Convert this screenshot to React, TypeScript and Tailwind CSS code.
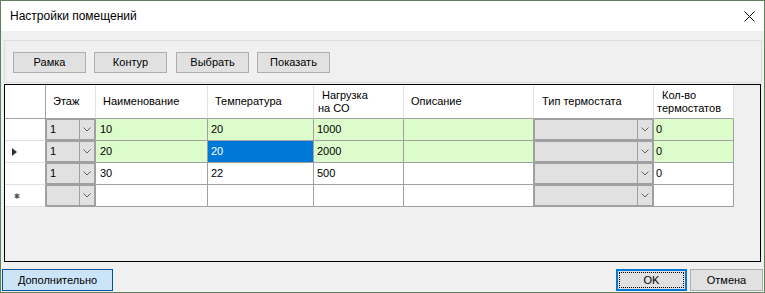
import React from "react";

const Chevron = () => (
  <svg width="8" height="5" viewBox="0 0 8 5" className="block">
    <path d="M0.5 0.5 L4 4 L7.5 0.5" fill="none" stroke="#606060" strokeWidth="1" />
  </svg>
);

type Row = {
  green: boolean;
  marker: "none" | "arrow" | "star";
  floor: string;
  name: string;
  temp: string;
  sel: boolean;
  load: string;
  cnt: string;
};

const rows: Row[] = [
  { green: true, marker: "none", floor: "1", name: "10", temp: "20", sel: false, load: "1000", cnt: "0" },
  { green: true, marker: "arrow", floor: "1", name: "20", temp: "20", sel: true, load: "2000", cnt: "0" },
  { green: false, marker: "none", floor: "1", name: "30", temp: "22", sel: false, load: "500", cnt: "0" },
  { green: false, marker: "star", floor: "", name: "", temp: "", sel: false, load: "", cnt: "" },
];

function Btn({ label, className }: { label: string; className: string }) {
  return (
    <div className={"flex items-center justify-center border border-[#adadad] bg-[#e1e1e1] text-[11px] text-black " + className}>
      {label}
    </div>
  );
}

function DataRow({ r }: { r: Row }) {
  const bg = r.green ? "bg-[#dcfccc]" : "bg-white";
  return (
    <div className="flex h-[22px]">
      <div className="flex h-[22px] w-[41px] items-center border-r border-b border-r-[#a0a0a0] border-b-[#e0e0e0] bg-white">
        {r.marker === "arrow" && (
          <svg width="5" height="8" viewBox="0 0 5 8" className="ml-[7px] block">
            <path d="M0 0 L5 4 L0 8 Z" fill="#333" />
          </svg>
        )}
        {r.marker === "star" && (
          <svg width="6" height="6" viewBox="0 0 6 6" className="ml-[9px] block">
            <path d="M3 0.3 L3 5.7 M0.5 1.5 L5.5 4.5 M0.5 4.5 L5.5 1.5" stroke="#666" strokeWidth="1.2" />
            <circle cx="3" cy="3" r="1.8" fill="#555" />
          </svg>
        )}
      </div>
      <div className="h-[22px] w-[50px] border-r border-b border-[#a0a0a0] bg-[#e1e1e1]">
        <div className="flex h-full w-full border border-[#a0a0a0]">
          <div className="flex flex-1 items-center pl-[3px] text-[11px] text-black">{r.floor}</div>
          <div className="flex w-[15px] items-center justify-center border-l border-[#a0a0a0]">
            <Chevron />
          </div>
        </div>
      </div>
      <div className={"flex h-[22px] w-[112px] items-center border-r border-b border-[#a0a0a0] pl-[4px] text-[11px] text-black " + bg}>{r.name}</div>
      <div
        className={
          "flex h-[22px] w-[106px] items-center border-r border-b border-[#a0a0a0] pl-[3px] text-[11px] " +
          (r.sel ? "bg-[#0078d7] text-white" : bg + " text-black")
        }
      >
        {r.temp}
      </div>
      <div className={"flex h-[22px] w-[90px] items-center border-r border-b border-[#a0a0a0] pl-[3px] text-[11px] text-black " + bg}>{r.load}</div>
      <div className={"flex h-[22px] w-[130px] items-center border-r border-b border-[#a0a0a0] pl-[3px] text-[11px] text-black " + bg}></div>
      <div className={"h-[22px] w-[120px] border-r border-b border-[#a0a0a0] " + bg}>
        <div className="flex h-full w-full border border-[#a0a0a0] bg-[#e1e1e1]">
          <div className="flex-1" />
          <div className="flex w-[15px] items-center justify-center border-l border-[#a0a0a0]">
            <Chevron />
          </div>
        </div>
      </div>
      <div className={"flex h-[22px] w-[80px] items-center border-r border-b border-[#a0a0a0] pl-[2px] text-[11px] text-black " + bg}>{r.cnt}</div>
    </div>
  );
}

export default function App() {
  return (
    <div className="flex h-[293px] w-[765px] flex-col overflow-hidden border border-[#5f7f5f] bg-[#f0f0f0] font-['Liberation_Sans',Arial,sans-serif] text-black">
      <div className="flex h-[30px] shrink-0 items-center justify-between bg-white pl-[9px] pr-[9px]">
        <span className="text-[12px]">Настройки помещений</span>
        <svg width="11" height="11" viewBox="0 0 11 11" className="block">
          <path d="M0.5 0.5 L10.5 10.5 M10.5 0.5 L0.5 10.5" stroke="#000" strokeWidth="1" />
        </svg>
      </div>
      <div className="flex flex-1 flex-col pl-[3px] pt-[9px]">
        <div className="flex h-[43px] w-[758px] items-start gap-[8px] border border-[#dcdcdc] pl-[8px] pt-[11px]">
          <Btn label="Рамка" className="h-[21px] w-[73px]" />
          <Btn label="Контур" className="h-[21px] w-[73px]" />
          <Btn label="Выбрать" className="ml-[1px] h-[21px] w-[73px]" />
          <Btn label="Показать" className="h-[21px] w-[73px]" />
        </div>
        <div className="mt-[1px] flex h-[178px] w-[757px] flex-col border border-black bg-[#f0f0f0]">
          <div className="flex h-[34px]">
            <div className="h-[34px] w-[41px] border-r border-b border-r-[#a0a0a0] border-b-[#a0a0a0] bg-white" />
            <div className="flex h-[34px] w-[50px] items-center border-r border-b border-r-[#e3e3e3] border-b-[#a0a0a0] bg-white pl-[7px] text-[11px]">Этаж</div>
            <div className="flex h-[34px] w-[112px] items-center border-r border-b border-r-[#e3e3e3] border-b-[#a0a0a0] bg-white pl-[7px] text-[11px]">Наименование</div>
            <div className="flex h-[34px] w-[106px] items-center border-r border-b border-r-[#e3e3e3] border-b-[#a0a0a0] bg-white pl-[7px] text-[11px]">Температура</div>
            <div className="flex h-[34px] w-[90px] flex-col justify-center border-r border-b border-r-[#e3e3e3] border-b-[#a0a0a0] bg-white text-[11px] leading-[13px]">
              <span className="pl-[8px]">Нагрузка</span>
              <span className="pl-[4px]">на СО</span>
            </div>
            <div className="flex h-[34px] w-[130px] items-center border-r border-b border-r-[#e3e3e3] border-b-[#a0a0a0] bg-white pl-[7px] text-[11px]">Описание</div>
            <div className="flex h-[34px] w-[120px] items-center border-r border-b border-r-[#e3e3e3] border-b-[#a0a0a0] bg-white pl-[8px] text-[11px]">Тип термостата</div>
            <div className="flex h-[34px] w-[80px] flex-col justify-center border-r border-b border-r-[#e3e3e3] border-b-[#a0a0a0] bg-white text-[11px] leading-[13px]">
              <span className="pl-[8px]">Кол-во</span>
              <span className="pl-[3px]">термостатов</span>
            </div>
          </div>
          {rows.map((r, i) => (
            <DataRow key={i} r={r} />
          ))}
        </div>
      </div>
      <div className="flex h-[22px] shrink-0 items-start justify-between px-[1px] mt-[7px] mb-[1px]">
        <div className="flex h-[22px] w-[111px] items-center justify-center border border-[#005499] bg-[#cce4f7] text-[11px]">Дополнительно</div>
        <div className="flex gap-[3px]">
          <div className="h-[22px] w-[71px] border-2 border-[#0078d7] bg-[#e1e1e1] p-[1px]">
            <div className="flex h-full w-full items-center justify-center border border-dotted border-black text-[11px]">OK</div>
          </div>
          <Btn label="Отмена" className="h-[22px] w-[73px]" />
        </div>
      </div>
    </div>
  );
}
